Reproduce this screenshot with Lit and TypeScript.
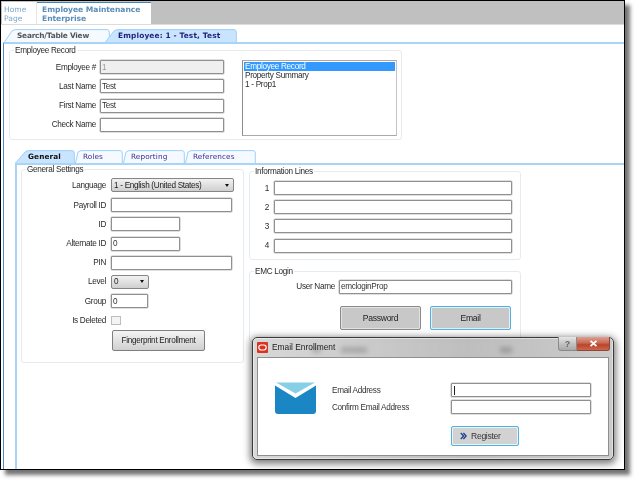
import { LitElement, html, css, svg } from "lit";
import { customElement } from "lit/decorators.js";

interface TabDef { label: string; x: number; w: number; pad: number; slant: number; active?: boolean; }

const OUTER: TabDef[] = [
  { label: "Search/Table View", x: 4, w: 106, pad: 13, slant: 10 },
  { label: "Employee: 1 - Test, Test", x: 105, w: 132, pad: 13, slant: 11, active: true },
];
const INNER: TabDef[] = [
  { label: "General", x: 15, w: 60, pad: 13, slant: 12, active: true },
  { label: "Roles", x: 75, w: 48, pad: 8, slant: 5 },
  { label: "Reporting", x: 123, w: 62, pad: 8, slant: 5 },
  { label: "References", x: 185, w: 71, pad: 8, slant: 5 },
];

function tabStrip(tabs: TabDef[], h: number, kind: string) {
  const origin = tabs[0].x;
  return html`<div class="strip ${kind}" style="height:${h}px">
    ${tabs.map((t) => {
      const p = `M0.5,${h} L${t.slant - 2},2 Q${t.slant},0.6 ${t.slant + 2},0.6 H${t.w - 3} Q${t.w - 0.7},0.6 ${t.w - 0.7},3 V${h}`;
      return html`<div class="tab ${t.active ? "active" : ""}" style="left:${t.x - origin}px;width:${t.w}px;padding-left:${t.pad}px">
        <svg class="tabshape" width=${t.w} height=${h} viewBox="0 0 ${t.w} ${h}">
          ${svg`<path d=${p + " Z"} fill=${t.active ? "#c8e4fe" : "#f4faff"} stroke="none"></path>
          <path d=${p} fill="none" stroke="#9ed0fa" stroke-width="1"></path>`}
        </svg>
        <span class="tablabel">${t.label}</span>
      </div>`;
    })}
  </div>`;
}

@customElement("app-root")
export class AppRoot extends LitElement {
  static styles = css`
    :host { display: block; width: 640px; height: 485px; background: #fff; font-family: "Liberation Sans", Arial, sans-serif; font-size: 8.2px; letter-spacing: -.3px; color: #2a2a2a; overflow: hidden; }
    * { box-sizing: border-box; }
    .frame { position: relative; width: 625px; height: 470px; border: 1px solid #000; background: #fff; display: flex; flex-direction: column; box-shadow: 5px 5px 4px rgba(0,0,0,.55); filter: blur(.35px); }
    .topbar { height: 24px; flex: none; background: #c0c0c0; border-bottom: 1px solid #dcdcdc; display: flex; padding: 1px 0 0 1px; font-family: "DejaVu Sans", sans-serif; font-size: 7.6px; line-height: 9px; letter-spacing: 0; }
    .home { width: 35px; background: #fff; color: #7ba6cc; padding: 3px 0 0 2px; font-weight: 400; border-right: 1px solid #e4e4e4; }
    .emp { width: 114px; background: #fff; border-top: 1.5px solid #3f86bd; color: #5a8dba; padding: 2px 0 0 5px; font-weight: 700; letter-spacing: -.05px; }
    .strip { position: relative; flex: none; font-family: "DejaVu Sans", sans-serif; letter-spacing: 0; }
    .strip.outer { margin: 4px 0 0 3px; font-size: 7.4px; }
    .strip.inner { margin: 10px 0 0 11px; font-size: 7.3px; letter-spacing: .1px; }
    .tab { position: absolute; top: 0; height: 100%; display: flex; align-items: center; color: #3c2b93; }
    .outer .tab { color: #555; font-weight: 600; letter-spacing: -.22px; }
    .outer .tab.active { color: #1e1e78; font-weight: 700; letter-spacing: .15px; }
    .inner .tab.active { color: #111; font-weight: 700; }
    .tabshape { position: absolute; left: 0; top: 0; }
    .tablabel { position: relative; white-space: nowrap; }
    .panel { flex: 1; min-height: 0; margin-left: 2px; border-left: 1px solid #4f8ccf; border-top: 2px solid #a8d4f8; padding-top: 2px; display: flex; flex-direction: column; }
    fieldset { margin: 0; border: 1px solid #e6ebf0; border-radius: 3px; min-width: 0; }
    legend { padding: 0 1px; margin-left: 4px; line-height: 9px; height: 9px; color: #2a2a2a; white-space: nowrap; }
    .record { margin-left: 5px; width: 393px; padding: 5px 3px 3px 0; display: flex; flex: none; }
    .form { display: grid; align-items: center; }
    .record .form { grid-template-columns: 86px 124px; column-gap: 4px; row-gap: 5.3px; grid-auto-rows: 14px; margin-right: 18px; }
    .form label { text-align: right; white-space: nowrap; }
    .in { display: block; height: 14px; border: 1px solid #909090; box-shadow: 0 0 0 .5px #c0c0c0; border-radius: 1px; background: #fff; font: inherit; letter-spacing: inherit; color: #333; padding: 0 1px; margin: 0; outline: none; }
    .in:disabled { background: #efefef; color: #999; }
    .w124 { width: 124px; } .w123 { width: 123px; } .w121 { width: 121px; } .w69 { width: 69px; } .w37 { width: 37px; } .w238 { width: 238px; } .w173 { width: 173px; } .w140 { width: 140px; }
    .list { width: 155px; height: 76px; border: 1px solid #a9a9a9; border-right-color: #c4c4c8; border-left-color: #8c8c8c; padding: 1px; line-height: 9.2px; background: #fff; margin-top: 0; }
    .list div { padding-left: 1px; height: 9.2px; white-space: nowrap; }
    .list .sel { background: #3399ff; color: #fff; }
    .subpanel { flex: 1; min-height: 0; margin-left: 11px; border-left: 2px solid #a8d4f8; border-top: 2px solid #a8d4f8; display: flex; gap: 5px; padding-left: 4px; }
    .general { width: 223px; height: 198px; padding: 5px 0 0 0; flex: none; }
    .general .form { grid-template-columns: 84px auto; column-gap: 5px; row-gap: 5.2px; grid-auto-rows: 14px; justify-items: start; }
    .general label { justify-self: end; }
    .first { margin-bottom: 2px; }
    .first-l { margin-bottom: 2px; }
    .select { height: 14px; border: 1px solid #858585; border-radius: 2px; background: linear-gradient(#f2f2f2, #cfcfcf); display: flex; align-items: center; justify-content: space-between; padding: 0 4px 0 2px; color: #222; }
    .select::after { content: ""; border: 2.5px solid transparent; border-top: 3px solid #111; border-bottom: 0; }
    .lvl { width: 38px; }
    .check { width: 9.5px; height: 9.5px; border: 1px solid #bdbdbd; background: #f4f4f4; }
    .fp { grid-column: 2; height: 21px; width: 93px; margin: 2px 0 0 1px; border: 1px solid #7f7f7f; border-radius: 2px; background: linear-gradient(#f4f4f4, #d0d0d0); display: flex; align-items: center; justify-content: center; font-size: 8.2px; color: #222; white-space: nowrap; }
    .right { display: flex; flex-direction: column; gap: 7px; margin-top: 2px; flex: none; width: 272px; }
    .info { padding: 5px 0 6px 0; }
    .info .form { grid-template-columns: 19px 238px; column-gap: 5px; row-gap: 5.2px; grid-auto-rows: 14px; }
    .emc { padding: 4px 0 0 0; height: 75px; }
    .emc .form { grid-template-columns: 85px 173px; column-gap: 4px; grid-auto-rows: 14px; }
    .btns { display: flex; gap: 9px; margin: 12px 0 0 90px; }
    .gbtn { width: 81px; height: 24px; background: #c8c8c8; border: 1px solid #8a8a8a; box-shadow: inset 0 0 0 1px #e2e2e2; border-radius: 2px; display: flex; align-items: center; justify-content: center; color: #222; font-size: 8.6px; }
    .gbtn.focus { border-color: #55b1dc; box-shadow: inset 0 0 0 1px #dff1fa; }
    .under { display: flex; justify-content: space-between; align-items: center; margin: 16px 8px 0 62px; height: 8px; }
    .under i { display: block; height: 6px; background: #6a6a6a; }
    .under .a { width: 9px; } .under .b { width: 26px; margin: 0 auto 0 20px; } .under .c { width: 12px; }
    .dialog { position: absolute; left: 251px; top: 336px; width: 362px; height: 123px; border: 1px solid #3a3a3a; border-radius: 5px; padding: 0 4px 3px 4px; background: linear-gradient(90deg, rgba(205,205,205,.78), rgba(165,165,165,.72) 60%, rgba(190,190,190,.8)); backdrop-filter: blur(2.5px); box-shadow: 0 2px 7px 2px rgba(0,0,0,.5), inset 0 0 0 1px rgba(255,255,255,.45); display: flex; flex-direction: column; }
    .title { height: 19px; flex: none; display: flex; align-items: flex-start; color: #1c1c1c; font-size: 8.4px; letter-spacing: 0; }
    .logo { margin-top: 4px; flex: none; }
    .titletext { margin: 5px 0 0 4px; line-height: 9px; white-space: nowrap; }
    .winbtns { margin: -1px -1px 0 auto; display: flex; height: 14px; }
    .help { width: 19px; background: linear-gradient(#e6e6e6, #c4c4c4 50%, #a8a8a8); border: 1px solid #8a8a8a; border-top: 0; border-radius: 0 0 0 3px; display: flex; align-items: center; justify-content: center; color: #666; font-size: 9px; font-weight: 700; }
    .close { width: 33px; background: linear-gradient(#dda092, #c96a55 45%, #b8452c 60%, #d0654c); border: 1px solid #8a4a3a; border-top: 0; border-left: 0; border-radius: 0 0 3px 0; display: flex; align-items: center; justify-content: center; }
    .body { flex: 1; min-height: 0; background: #fff; border: 1px solid #8f8f8f; display: flex; align-items: flex-start; padding: 24px 0 0 17px; gap: 16px; }
    .envelope { flex: none; }
    .dform { display: grid; grid-template-columns: 119px 140px; row-gap: 3px; grid-auto-rows: 14px; align-items: center; margin-top: 1px; color: #333; }
    .dform label { white-space: nowrap; }
    .caret { background: linear-gradient(#222, #222) 2px 2px / 1px 9px no-repeat #fff; }
    .reg { grid-column: 2; width: 68px; height: 20px; margin-top: 9px; align-self: start; background: #d2d2d2; border: 1px solid #55b1dc; box-shadow: inset 0 0 0 1px #e6f4fb; border-radius: 2px; display: flex; align-items: center; padding-left: 8px; gap: 4px; color: #333; font-size: 8.6px; }
  `;

  render() {
    return html`<div class="frame">
      <div class="topbar">
        <div class="home">Home<br />Page</div>
        <div class="emp">Employee Maintenance<br />Enterprise</div>
      </div>
      ${tabStrip(OUTER, 13, "outer")}
      <div class="panel">
        <fieldset class="record">
          <legend>Employee Record</legend>
          <div class="form">
            <label>Employee #</label><input class="in w124" disabled .value=${"1"} />
            <label>Last Name</label><input class="in w124" .value=${"Test"} />
            <label>First Name</label><input class="in w124" .value=${"Test"} />
            <label>Check Name</label><input class="in w124" />
          </div>
          <div class="list">
            <div class="sel">Employee Record</div>
            <div>Property Summary</div>
            <div>1 - Prop1</div>
          </div>
        </fieldset>
        ${tabStrip(INNER, 13, "inner")}
        <div class="subpanel">
          <fieldset class="general">
            <legend>General Settings</legend>
            <div class="form">
              <label class="first-l">Language</label><div class="select w123 first">1 - English (United States)</div>
              <label>Payroll ID</label><input class="in w121" />
              <label>ID</label><input class="in w69" />
              <label>Alternate ID</label><input class="in w69" .value=${"0"} />
              <label>PIN</label><input class="in w121" />
              <label>Level</label><div class="select lvl">0</div>
              <label>Group</label><input class="in w37" .value=${"0"} />
              <label>Is Deleted</label><div class="check"></div>
              <div class="fp">Fingerprint Enrollment</div>
            </div>
          </fieldset>
          <div class="right">
            <fieldset class="info">
              <legend>Information Lines</legend>
              <div class="form">
                ${[1, 2, 3, 4].map((n) => html`<label>${n}</label><input class="in w238" />`)}
              </div>
            </fieldset>
            <fieldset class="emc">
              <legend>EMC Login</legend>
              <div class="form"><label>User Name</label><input class="in w173" .value=${"emcloginProp"} /></div>
              <div class="btns">
                <div class="gbtn">Password</div>
                <div class="gbtn focus">Email</div>
              </div>
              <div class="under"><i class="a"></i><i class="b"></i><i class="c"></i></div>
            </fieldset>
          </div>
        </div>
      </div>

      <div class="dialog">
        <div class="title">
          <svg class="logo" width="11" height="11" viewBox="0 0 11 11">
            <rect width="11" height="11" rx="1" fill="#d9341f"></rect>
            <rect x="1.8" y="3" width="7.4" height="5" rx="2.4" fill="none" stroke="#fff" stroke-width="1.2"></rect>
          </svg>
          <span class="titletext">Email Enrollment</span>
          <div class="winbtns">
            <div class="help">?</div>
            <div class="close">
              <svg width="9" height="7" viewBox="0 0 9 7"><path d="M1.5 .8 L7.5 6.2 M7.5 .8 L1.5 6.2" stroke="#fff" stroke-width="1.8"></path></svg>
            </div>
          </div>
        </div>
        <div class="body">
          <svg class="envelope" width="41" height="32" viewBox="0 0 41 32">
            <path d="M1 0.5 H40 L20.5 11.5 Z" fill="#85d0e6"></path>
            <path d="M0 3.5 L20.5 16 L41 3.5 V29 Q41 32 38 32 H3 Q0 32 0 29 Z" fill="#1a87c4"></path>
          </svg>
          <div class="dform">
            <label>Email Address</label><input class="in w140 caret" />
            <label>Confirm Email Address</label><input class="in w140" />
            <div class="reg">
              <svg width="7" height="8" viewBox="0 0 7 8"><path d="M.8 1 L3.6 4 L.8 7 M3.4 1 L6.2 4 L3.4 7" fill="none" stroke="#1a3f8a" stroke-width="1.3"></path></svg>
              <span>Register</span>
            </div>
          </div>
        </div>
      </div>
    </div>`;
  }
}
